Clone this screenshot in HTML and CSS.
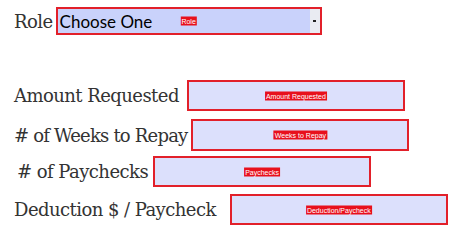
FILE: index.html
```html
<!DOCTYPE html>
<html>
<head>
<meta charset="utf-8">
<link rel="stylesheet" href="styles.css">
</head>
<body>
<div class="form">
  <div class="row row-role">
    <span class="label">Role</span>
    <div class="field select">
      <span class="select-text">Choose One</span>
      <span class="arrow"><span class="arrow-dot"></span></span>
      <span class="tag">Role</span>
    </div>
  </div>
  <div class="row row-amount">
    <span class="label">Amount Requested</span>
    <div class="field"><span class="tag">Amount Requested</span></div>
  </div>
  <div class="row row-weeks">
    <span class="label">#&nbsp;of Weeks to Repay</span>
    <div class="field field-tall"><span class="tag">Weeks to Repay</span></div>
  </div>
  <div class="row row-pay">
    <span class="label">#&nbsp;of Paychecks</span>
    <div class="field"><span class="tag">Paychecks</span></div>
  </div>
  <div class="row row-ded">
    <span class="label">Deduction $ / Paycheck</span>
    <div class="field"><span class="tag">Deduction/Paycheck</span></div>
  </div>
</div>
</body>
</html>
```
FILE: styles.css
```css
html, body {
  margin: 0;
  padding: 0;
  background: #ffffff;
}
.form {
  display: flex;
  flex-direction: column;
  padding: 7px 0 0 14px;
}
.row {
  display: flex;
  align-items: center;
  gap: 8px;
}
.label {
  font-family: "DejaVu Serif", serif;
  font-size: 18px;
  letter-spacing: -0.55px;
  color: #333333;
  white-space: nowrap;
}
.field {
  position: relative;
  box-sizing: border-box;
  width: 218px;
  height: 31px;
  border: 2px solid #e2202a;
  background: #dce0fc;
  display: flex;
  align-items: center;
  justify-content: center;
}
.field-tall { height: 32px; }
.tag {
  position: absolute;
  left: 50%;
  top: 50%;
  transform: translate(-50%, -50%);
  background: #e8101c;
  color: #ffffff;
  font-family: "Liberation Sans", Arial, sans-serif;
  font-size: 7px;
  line-height: 9px;
  padding: 0 1px;
  white-space: nowrap;
}
.row-role { height: 28px; gap: 3px; }
.select {
  width: 266px;
  height: 28px;
  background: #c9d2fb;
  justify-content: flex-start;
}
.select-text {
  font-family: "Lato", sans-serif;
  font-size: 17px;
  color: #000000;
  padding-left: 2px;
  flex: 1;
}
.arrow {
  width: 10px;
  align-self: stretch;
  background: #e9ebf2;
  display: flex;
  align-items: center;
  justify-content: center;
}
.arrow-dot {
  width: 3px;
  height: 2px;
  background: #222222;
}
.row-amount { margin-top: 45px; }
.row-weeks { margin-top: 8px; gap: 4px; }
.row-weeks .label { letter-spacing: -0.8px; }
.row-pay { margin-top: 5px; padding-left: 3px; gap: 5px; }
.row-ded { margin-top: 7px; gap: 14px; }
```
